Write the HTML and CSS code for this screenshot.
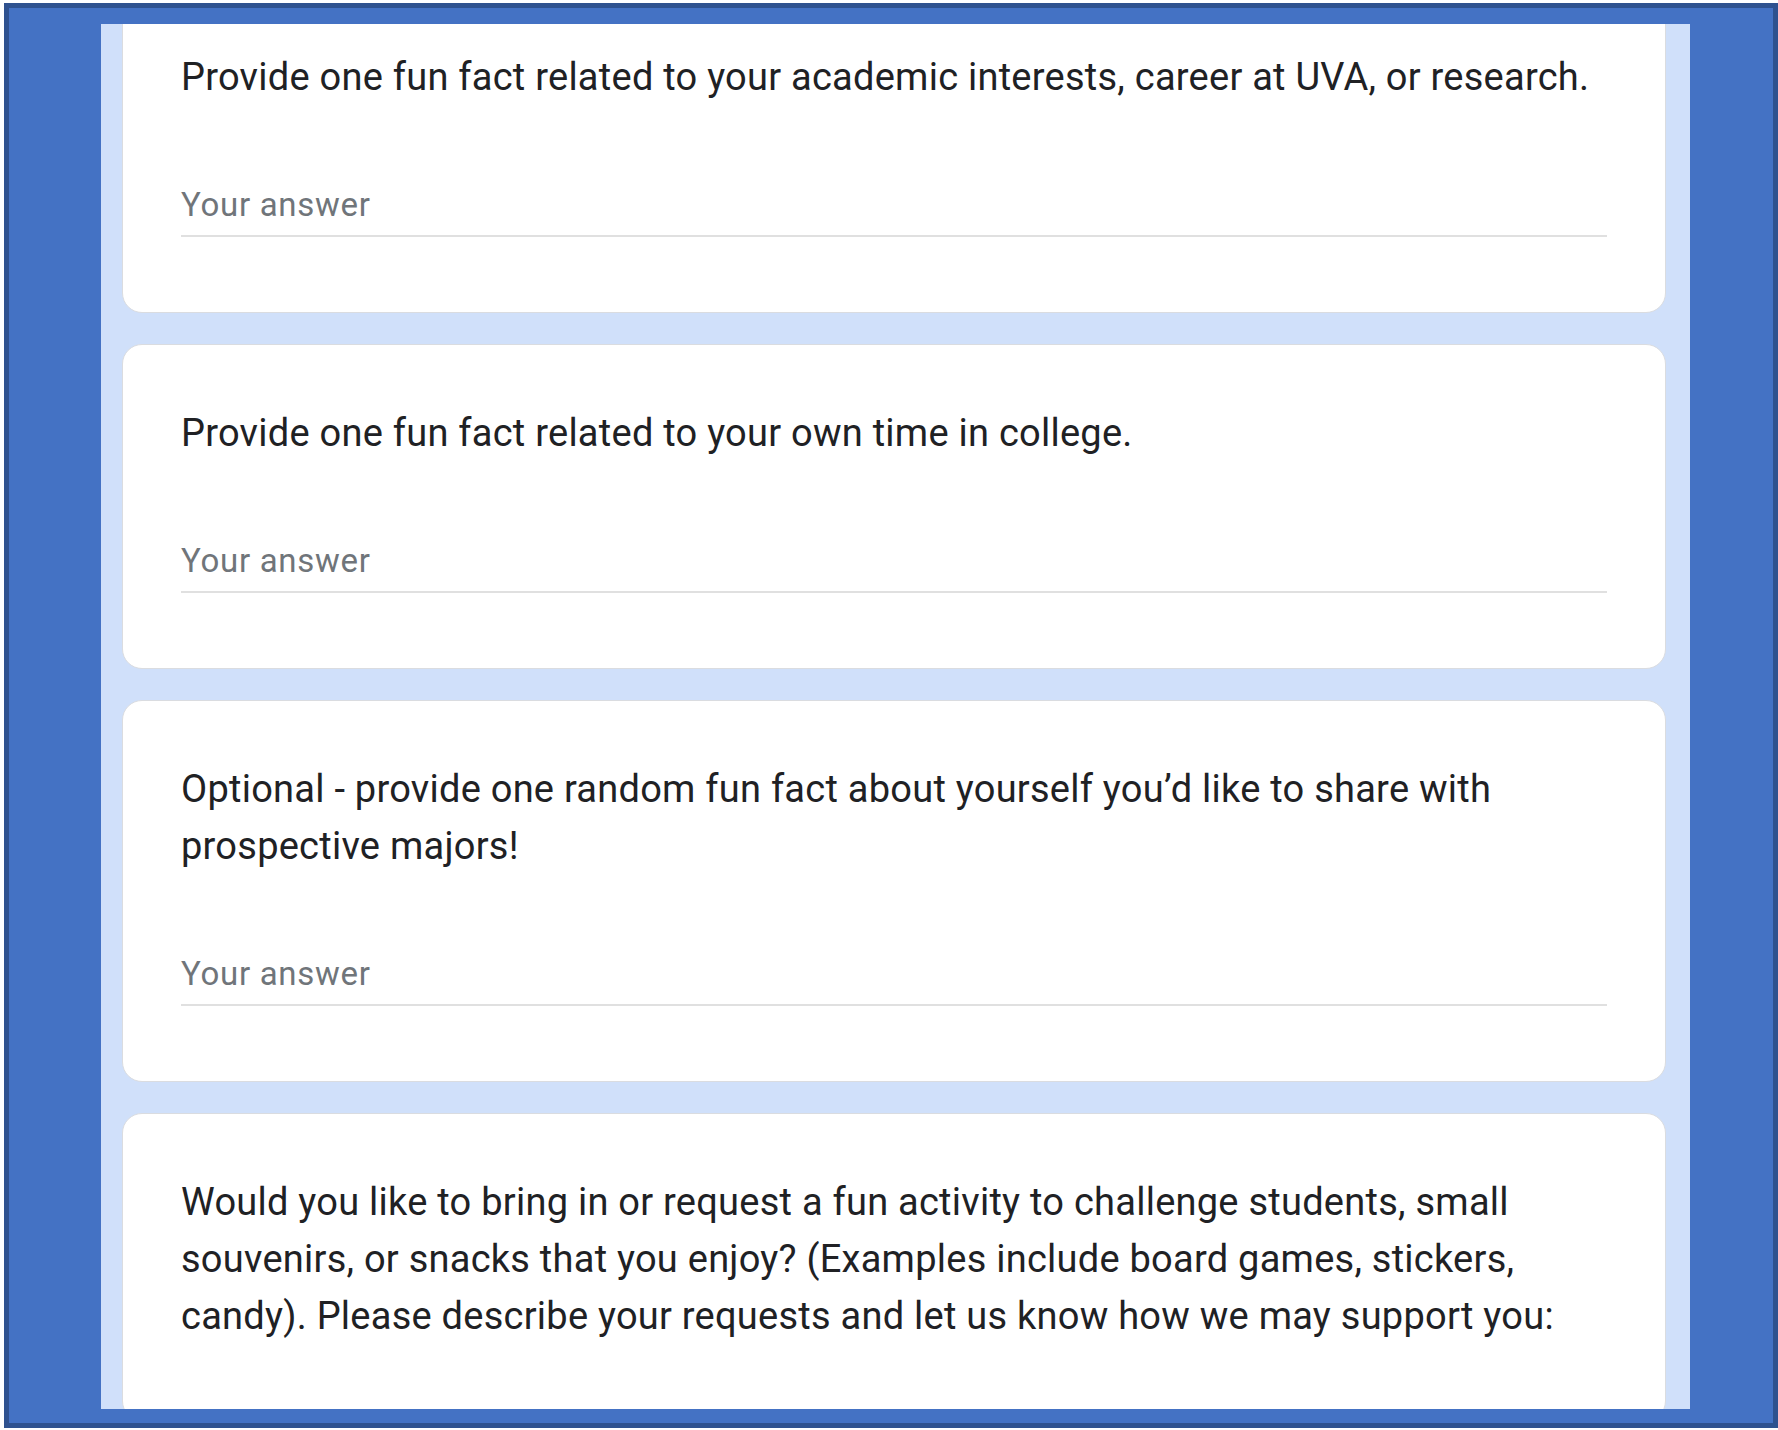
FILE: index.html
```html
<!DOCTYPE html>
<html lang="en">
<head>
<meta charset="utf-8">
<title>Form questions</title>
<link rel="stylesheet" href="styles.css">
</head>
<body>
<div class="frame">
  <div class="shot">
    <div class="form">
      <div class="card">
        <div class="title">Provide one fun fact related to your academic interests, career at UVA, or research.</div>
        <div class="answer">Your answer</div>
      </div>
      <div class="card">
        <div class="title">Provide one fun fact related to your own time in college.</div>
        <div class="answer">Your answer</div>
      </div>
      <div class="card">
        <div class="title">Optional - provide one random fun fact about yourself you’d like to share with prospective majors!</div>
        <div class="answer">Your answer</div>
      </div>
      <div class="card">
        <div class="title">Would you like to bring in or request a fun activity to challenge students, small souvenirs, or snacks that you enjoy? (Examples include board games, stickers, candy). Please describe your requests and let us know how we may support you:</div>
      </div>
    </div>
  </div>
</div>
</body>
</html>
```

FILE: styles.css
```css
html, body {
  margin: 0;
  padding: 0;
  background: #ffffff;
}

body {
  width: 1778px;
  height: 1430px;
  overflow: hidden;
  font-family: Roboto, "Liberation Sans", Arial, sans-serif;
}

.frame {
  box-sizing: border-box;
  margin: 3px 0 0 4px;
  width: 1774px;
  height: 1425px;
  border: 5px solid #2f528f;
  background: #4472c4;
  padding: 16px 0 0 92px;
}

.shot {
  width: 1589px;
  height: 1385px;
  background: #d0e0fa;
  overflow: hidden;
}

.form {
  display: flex;
  flex-direction: column;
  gap: 31px;
  margin: -36px 24px 0 21px;
}

.card {
  background: #ffffff;
  border: 1px solid #dadce0;
  border-radius: 20px;
  padding: 60px 58px 75px 58px;
}

.title {
  font-size: 38px;
  line-height: 57px;
  letter-spacing: 0.25px;
  color: #202124;
}

.answer {
  margin-top: 80px;
  font-size: 33px;
  line-height: 38px;
  letter-spacing: 0.7px;
  padding-bottom: 11px;
  color: #70757a;
  border-bottom: 2px solid #e0e0e0;
}
```
